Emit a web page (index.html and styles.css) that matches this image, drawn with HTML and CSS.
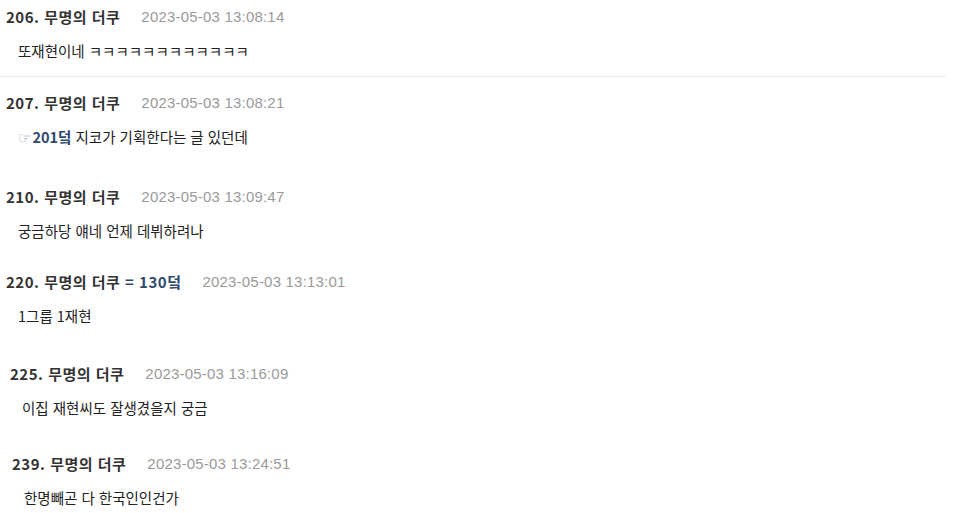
FILE: index.html
```html
<!DOCTYPE html>
<html lang="ko">
<head>
<meta charset="utf-8">
<link rel="stylesheet" href="styles.css">
</head>
<body>
<div class="list">
  <div class="item i1">
    <div class="hd"><span class="no">206. 무명의 더쿠</span><span class="date">2023-05-03 13:08:14</span></div>
    <div class="bd">또재현이네 ㅋㅋㅋㅋㅋㅋㅋㅋㅋㅋㅋㅋ</div>
  </div>
  <div class="sep"></div>
  <div class="item i2">
    <div class="hd"><span class="no">207. 무명의 더쿠</span><span class="date">2023-05-03 13:08:21</span></div>
    <div class="bd"><span class="hand">☞</span><span class="ref">201덬</span> 지코가 기획한다는 글 있던데</div>
  </div>
  <div class="item i3">
    <div class="hd"><span class="no">210. 무명의 더쿠</span><span class="date">2023-05-03 13:09:47</span></div>
    <div class="bd">궁금하당 얘네 언제 데뷔하려나</div>
  </div>
  <div class="item i4">
    <div class="hd"><span class="no">220. 무명의 더쿠 <span class="ref">= 130덬</span></span><span class="date">2023-05-03 13:13:01</span></div>
    <div class="bd">1그룹 1재현</div>
  </div>
  <div class="item i5">
    <div class="hd"><span class="no">225. 무명의 더쿠</span><span class="date">2023-05-03 13:16:09</span></div>
    <div class="bd">이집 재현씨도 잘생겼을지 궁금</div>
  </div>
  <div class="item i6">
    <div class="hd"><span class="no">239. 무명의 더쿠</span><span class="date">2023-05-03 13:24:51</span></div>
    <div class="bd">한명빼곤 다 한국인인건가</div>
  </div>
</div>
</body>
</html>
```
FILE: styles.css
```css
html, body {
  margin: 0;
  padding: 0;
  background: #ffffff;
}
body {
  font-family: "Noto Sans CJK KR", "Noto Sans", sans-serif;
  color: #222222;
  width: 960px;
  height: 513px;
  overflow: hidden;
}
.list {
  display: flex;
  flex-direction: column;
  padding-top: 6px;
}
.item {
  display: flex;
  flex-direction: column;
}
.hd {
  display: flex;
  align-items: center;
  height: 20px;
  white-space: nowrap;
}
.no {
  font-size: 15px;
  font-weight: 700;
  color: #333333;
  letter-spacing: 0.5px;
}
.date {
  margin-left: 21px;
  font-size: 15px;
  color: #9a9a9a;
  font-family: "Liberation Sans", "Noto Sans CJK KR", sans-serif;
  letter-spacing: 0.2px;
}
.bd {
  margin-top: 15px;
  height: 20px;
  line-height: 20px;
  font-size: 14.5px;
  color: #222222;
  padding-left: 12px;
  white-space: nowrap;
}
.ref {
  color: #2f4a6d;
  font-weight: 700;
}
.hand {
  font-family: "DejaVu Sans", sans-serif;
  font-size: 15px;
  color: #8a9ab2;
  margin-right: 1px;
}
.sep {
  height: 1px;
  background: #ececec;
  width: 946px;
  margin-top: 15px;
  margin-bottom: 15px;
}
.i1 { padding-left: 6px; }
.i2 { padding-left: 6px; }
.i3 { padding-left: 6px; margin-top: 39px; }
.i4 { padding-left: 6px; margin-top: 30px; }
.i5 { padding-left: 10px; margin-top: 37px; }
.i6 { padding-left: 12px; margin-top: 35px; }
```
